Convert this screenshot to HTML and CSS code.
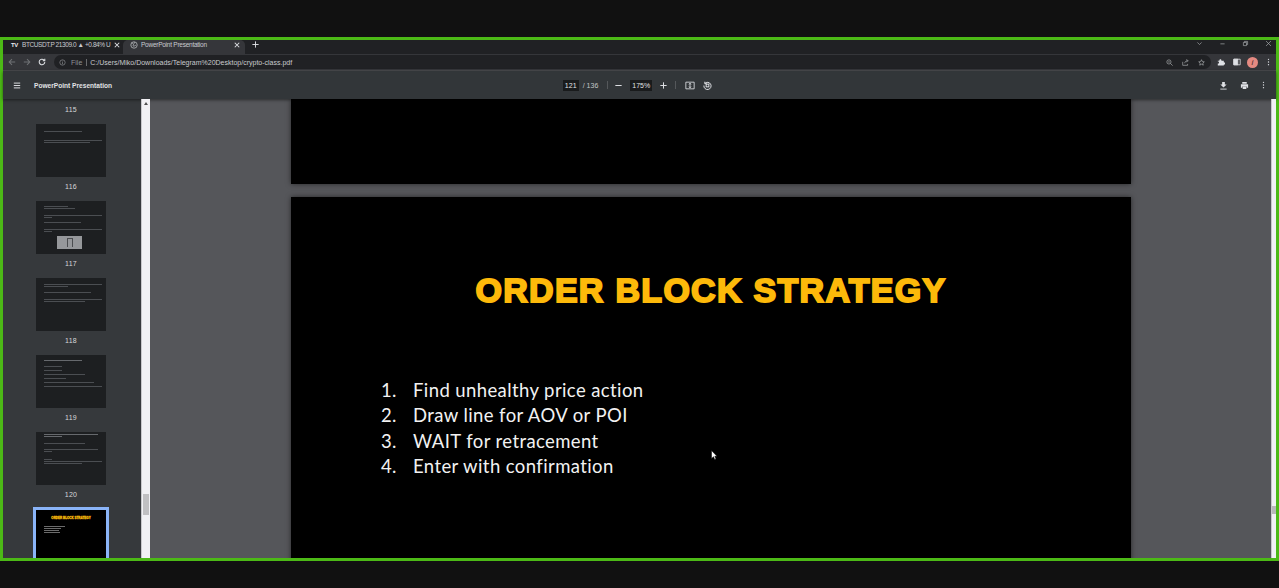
FILE: index.html
```html
<!DOCTYPE html>
<html lang="en">
<head>
    <meta charset="UTF-8">
    <title>PowerPoint Presentation</title>
    <link rel="stylesheet" href="styles.css">
</head>
<body>

<div class="top-band"></div>

<div class="window">
    <div class="tabstrip">
        <div class="tab tab-inactive">
            <span class="tv-logo">TV</span>
            <span class="tab-title tab-title-clip">BTCUSDT.P 21309.0 ▲ +0.84% U</span>
            <svg class="tab-close" viewBox="0 0 8 8"><path d="M1 1l6 6M7 1L1 7"/></svg>
        </div>
        <div class="tab tab-active">
            <svg class="globe" viewBox="0 0 10 10"><circle cx="5" cy="5" r="4"/><path d="M2 2.500c2 .5 3 1.500 2 3s2 1 3.500-.5M6 1.500L5 3.500"/></svg>
            <span class="tab-title tab-title-wide">PowerPoint Presentation</span>
            <svg class="tab-close" viewBox="0 0 8 8"><path d="M1 1l6 6M7 1L1 7"/></svg>
        </div>
        <svg class="new-tab" viewBox="0 0 9 9"><path d="M4.500 .5v8M.5 4.500h8"/></svg>
        <div class="window-controls">
            <svg class="win-icon" viewBox="0 0 10 10"><path d="M2 3.500l3 3 3-3"/></svg>
            <svg class="win-icon" viewBox="0 0 10 10"><path d="M2 5.500h6"/></svg>
            <svg class="win-icon" viewBox="0 0 10 10"><path d="M2 3.500h4.500v4.500h-4.500zM3.500 3.500v-1.500h4.500v4.500h-1.500"/></svg>
            <svg class="win-icon" viewBox="0 0 10 10"><path d="M1.500 1.500l7 7M8.500 1.500l-7 7"/></svg>
        </div>
    </div>

    <div class="addressbar">
        <svg class="nav-icon dim" viewBox="0 0 10 10"><path d="M9 5H1.500M5 1.500L1.500 5 5 8.500"/></svg>
        <svg class="nav-icon dim" viewBox="0 0 10 10"><path d="M1 5h7.500M5 1.500L8.500 5 5 8.500"/></svg>
        <svg class="nav-icon" viewBox="0 0 10 10"><path d="M8.500 5a3.500 3.500 0 1 1-1-2.500M8.500 1v2.500H6"/></svg>
        <div class="omnibox">
            <svg class="info-icon" viewBox="0 0 10 10"><circle cx="5" cy="5" r="3.800"/><path d="M5 4.500v3M5 2.500v1"/></svg>
            <span class="file-label">File</span>
            <span class="url">C:/Users/Miko/Downloads/Telegram%20Desktop/crypto-class.pdf</span>
            <div class="omni-right">
                <svg class="omni-icon" viewBox="0 0 10 10"><circle cx="4.200" cy="4.200" r="3"/><path d="M6.500 6.500l3 3M2.800 4.200h2.800"/></svg>
                <svg class="omni-icon" viewBox="0 0 10 10"><path d="M1 4v5h7V7M4 6c0-2 1.500-3.500 3.500-3.500M6 .8l3 1.700-3 1.700"/></svg>
                <svg class="omni-icon" viewBox="0 0 10 10"><path d="M5 1l1.200 2.700 2.800.3-2.100 1.900.6 2.900L5 7.400 2.500 8.800l.6-2.900L1 4l2.800-.3z"/></svg>
            </div>
        </div>
        <svg class="ext-icon" viewBox="0 0 10 10"><path d="M1 3.500h2c-.5-2.500 3-2.500 2.500 0h3v2c2.200-.5 2.200 3.300 0 2.800v1.200H1V7c2 .5 2-3 0-2.500z"/></svg>
        <svg class="ext-panel" viewBox="0 0 10 10"><path d="M1 1.500h8v7H1z"/><path class="panel-fill" d="M1 1.500h5v7H1z"/></svg>
        <span class="avatar">i</span>
        <svg class="menu-dots" viewBox="0 0 4 12"><circle cx="2" cy="2" r="1"/><circle cx="2" cy="6" r="1"/><circle cx="2" cy="10" r="1"/></svg>
    </div>

    <div class="pdf-toolbar">
        <div class="toolbar-left">
            <svg class="hamburger" viewBox="0 0 10 8"><path d="M1 1h8M1 4h8M1 7h8"/></svg>
            <span class="doc-title">PowerPoint Presentation</span>
        </div>
        <div class="toolbar-center">
            <span class="num-box">121</span>
            <span class="page-total">/ 136</span>
            <span class="divider"></span>
            <svg class="tool-icon" viewBox="0 0 10 10"><path d="M1.500 5h7"/></svg>
            <span class="num-box zoom-box">175%</span>
            <svg class="tool-icon" viewBox="0 0 10 10"><path d="M1.500 5h7M5 1.500v7"/></svg>
            <span class="divider divider-end"></span>
            <svg class="fit-icon" viewBox="0 0 12 10"><path d="M1 1h10v8H1z"/><path d="M6 2.500v5M4.500 3.500L6 2.500l1.500 1M4.500 6.500L6 7.500l1.500-1"/></svg>
            <svg class="tool-icon" viewBox="0 0 10 10"><path d="M2 2.800a4 4 0 1 1-1 2.200M2 .8v2.200h2.200"/><rect x="3.500" y="3.500" width="3" height="3"/></svg>
        </div>
        <div class="toolbar-right">
            <svg class="right-icon" viewBox="0 0 10 10"><path class="solid" d="M3.500 1h3v3h2L5 7.200 1.500 4h2z"/><path d="M1.500 9h7"/></svg>
            <svg class="right-icon" viewBox="0 0 10 10"><path class="solid" d="M2.500 1h5v2h-5zM1 3.500h8v4H7.500V6h-5v1.500H1zM3 6.500h4V9H3z"/></svg>
            <svg class="menu-dots" viewBox="0 0 4 12"><circle cx="2" cy="2" r="1"/><circle cx="2" cy="6" r="1"/><circle cx="2" cy="10" r="1"/></svg>
        </div>
    </div>

    <div class="viewer">
        <aside class="sidebar">
            <div class="thumb-list">
                <div class="thumb-label first-label">115</div>

                <div class="thumb">
                    <i class="line w65 mt7"></i>
                    <i class="line w98 mt8"></i>
                    <i class="line w78"></i>
                </div>
                <div class="thumb-label">116</div>

                <div class="thumb">
                    <i class="line w40 mt5"></i>
                    <i class="line w52"></i>
                    <i class="line w98 mt6"></i>
                    <i class="line w14"></i>
                    <i class="line w62 mt4"></i>
                    <i class="line w98 mt6"></i>
                    <i class="line w14"></i>
                    <span class="thumb-pic"><b></b></span>
                </div>
                <div class="thumb-label">117</div>

                <div class="thumb">
                    <i class="line w98 mt6"></i>
                    <i class="line w40"></i>
                    <i class="line w80 mt5"></i>
                    <i class="line w98 mt6"></i>
                    <i class="line w70"></i>
                </div>
                <div class="thumb-label">118</div>

                <div class="thumb">
                    <i class="line w65 mt5 bright"></i>
                    <i class="line w30 mt5"></i>
                    <i class="line w30 mt3"></i>
                    <i class="line w70 mt3"></i>
                    <i class="line w38 mt3"></i>
                    <i class="line w85 mt3"></i>
                    <i class="line w98 mt3"></i>
                </div>
                <div class="thumb-label">119</div>

                <div class="thumb">
                    <i class="line w92 mt2 bright"></i>
                    <i class="line w30 bright"></i>
                    <i class="line w70 mt6"></i>
                    <i class="line w92 mt5"></i>
                    <i class="line w14"></i>
                    <i class="line w14 mt7"></i>
                    <i class="line w98"></i>
                    <i class="line w65"></i>
                </div>
                <div class="thumb-label">120</div>

                <div class="thumb-selected">
                    <div class="mini-title">ORDER BLOCK STRATEGY</div>
                    <i class="mini-line w36 mini-first"></i>
                    <i class="mini-line w30"></i>
                    <i class="mini-line w26"></i>
                    <i class="mini-line w28"></i>
                </div>
            </div>
        </aside>
        <div class="side-scrollbar">
            <span class="scroll-arrow"></span>
            <span class="side-thumb"></span>
        </div>

        <main class="document">
            <div class="pages">
                <div class="page page-prev"></div>
                <div class="page page-current">
                    <h1 class="slide-title">ORDER BLOCK STRATEGY</h1>
                    <ol class="slide-list">
                        <li>Find unhealthy price action</li>
                        <li>Draw line for AOV or POI</li>
                        <li>WAIT for retracement</li>
                        <li>Enter with confirmation</li>
                    </ol>
                </div>
            </div>
            <div class="doc-scrollbar"><span class="doc-thumb"></span></div>
            <svg class="cursor" viewBox="0 0 7 10"><path d="M.5 .5v8l2-1.800 1.200 2.800 1.300-.6-1.200-2.600H6z"/></svg>
        </main>
    </div>
</div>

<div class="bottom-band"></div>

</body>
</html>
```

FILE: styles.css
```css
* {
    box-sizing: border-box;
}
html, body {
    height: 100%;
}
body {
    margin: 0;
    height: 588px;
    overflow: hidden;
    display: flex;
    flex-direction: column;
    background-color: #111;
    font-family: "Liberation Sans", Arial, sans-serif;
    color: #e8eaed;
}
svg {
    display: block;
    flex: none;
    fill: none;
    stroke: #dfe1e5;
    stroke-width: 1;
}

.top-band {
    height: 37px;
    background-color: #111;
}
.bottom-band {
    height: 27px;
    background-color: #111;
}
.window {
    height: 524px;
    border: 3px solid #4cb916;
    display: flex;
    flex-direction: column;
    background-color: #202124;
}

/* tabs */
.tabstrip {
    height: 14px;
    display: flex;
    align-items: flex-start;
    background-color: #202124;
    font-size: 6.500px;
}
.tab {
    height: 14px;
    padding-bottom: 5px;
    display: flex;
    align-items: center;
}
.tab-inactive {
    width: 120px;
    padding-left: 8px;
}
.tab-active {
    width: 122px;
    padding-left: 7px;
    background-color: #35363a;
    border-radius: 5px 5px 0 0;
}
.tv-logo {
    width: 11px;
    font-size: 6px;
    font-weight: bold;
    letter-spacing: -.5px;
}
.tab-title {
    color: #c9cbcf;
    white-space: nowrap;
    letter-spacing: -.25px;
}
.tab-title-clip {
    width: 87px;
    letter-spacing: -.42px;
}
.tab-title-wide {
    width: 93px;
    margin-left: 3px;
}
.tab-close {
    width: 6px;
    height: 6px;
    margin-left: 5px;
    stroke-width: 1.400;
}
.tab-active .tab-close {
    margin-left: 0;
}
.globe {
    width: 8px;
    height: 8px;
    stroke: #b8babd;
}
.new-tab {
    width: 7px;
    height: 7px;
    margin: 1px 0 0 7px;
    stroke-width: 1.200;
}
.window-controls {
    margin-left: auto;
    display: flex;
    gap: 16px;
    padding-right: 4px;
}
.win-icon {
    width: 7px;
    height: 7px;
    stroke: #a4a6a9;
}

/* address bar */
.addressbar {
    height: 17px;
    display: flex;
    align-items: center;
    padding-left: 5px;
    background-color: #35363a;
    border-bottom: 1px solid #4a4b4e;
}
.nav-icon {
    width: 8px;
    height: 8px;
    margin-right: 7px;
    stroke: #dfe1e5;
    stroke-width: 1.300;
}
.nav-icon.dim {
    stroke: #6f7174;
}
.omnibox {
    width: 1157px;
    height: 14px;
    margin-left: 1px;
    display: flex;
    align-items: center;
    padding-left: 5px;
    border-radius: 8px;
    background-color: #202124;
    font-size: 7px;
    white-space: nowrap;
}
.info-icon {
    width: 7px;
    height: 7px;
    stroke: #8a8c8f;
}
.file-label {
    margin-left: 5px;
    padding-right: 4px;
    border-right: 1px solid #6a6b6e;
    color: #8f9194;
}
.url {
    margin-left: 3px;
    color: #c8cacd;
}
.omni-right {
    margin-left: auto;
    display: flex;
    gap: 9px;
    padding-right: 6px;
}
.omni-icon {
    width: 7px;
    height: 7px;
    stroke: #b3b5b8;
    stroke-width: .9;
}
.ext-icon {
    width: 8px;
    height: 8px;
    margin-left: 6px;
    fill: #dfe1e5;
    stroke: none;
}
.ext-panel {
    width: 8px;
    height: 8px;
    margin-left: 8px;
}
.panel-fill {
    fill: #dfe1e5;
}
.avatar {
    width: 11px;
    height: 11px;
    margin-left: 6px;
    border-radius: 50%;
    background-color: #e58a82;
    color: #3a2320;
    font-size: 8px;
    font-style: italic;
    line-height: 11px;
    text-align: center;
}
.menu-dots {
    width: 3px;
    height: 8px;
    margin-left: 9px;
    fill: #dfe1e5;
    stroke: none;
}

/* pdf toolbar */
.pdf-toolbar {
    height: 28px;
    display: grid;
    grid-template-columns: 1fr auto 1fr;
    align-items: center;
    background-color: #323639;
    box-shadow: 0 1px 3px rgba(0, 0, 0, .5);
    position: relative;
}
.toolbar-left {
    display: flex;
    align-items: center;
    padding-left: 10px;
}
.hamburger {
    width: 8px;
    height: 7px;
    stroke-width: 1.200;
}
.doc-title {
    margin-left: 13px;
    font-size: 6.600px;
    font-weight: bold;
    color: #e0e2e4;
}
.toolbar-center {
    display: flex;
    align-items: center;
    margin-left: -4px;
    font-size: 7px;
}
.num-box {
    width: 16px;
    height: 11px;
    line-height: 11px;
    text-align: center;
    background-color: #191b1c;
    color: #e0e2e4;
}
.zoom-box {
    width: 22px;
    margin: 0 7px;
}
.page-total {
    margin-left: 4px;
    color: #c4c6c8;
}
.divider {
    width: 1px;
    height: 8px;
    margin: 0 6px 0 9px;
    background-color: #55585b;
}
.divider-end {
    margin: 0 9px 0 7px;
}
.tool-icon {
    width: 9px;
    height: 9px;
    stroke-width: 1.100;
}
.fit-icon {
    width: 10px;
    height: 9px;
    margin-right: 8px;
}
.toolbar-right {
    display: flex;
    justify-content: flex-end;
    align-items: center;
    gap: 12px;
    padding-right: 11px;
}
.toolbar-right .menu-dots {
    margin-left: 1px;
}
.right-icon {
    width: 9px;
    height: 9px;
}
.right-icon .solid {
    fill: #dfe1e5;
    stroke: none;
}

/* sidebar */
.viewer {
    flex: 1;
    min-height: 0;
    display: flex;
    background-color: #55565a;
}
.sidebar {
    width: 138px;
    flex: none;
    overflow: hidden;
    background-color: #36393c;
}
.thumb-list {
    display: flex;
    flex-direction: column;
    align-items: center;
    padding-right: 2px;
}
.thumb {
    width: 70px;
    height: 53px;
    padding: 0 3px 0 8px;
    display: flex;
    flex-direction: column;
    align-items: flex-start;
    background-color: #1d1f21;
}
.thumb-label {
    height: 24px;
    padding-top: 5px;
    font-size: 7px;
    letter-spacing: .2px;
    line-height: 10px;
    color: #d6d8da;
}
.first-label {
    height: 25px;
    padding-top: 6px;
}
.line {
    display: block;
    height: 1px;
    margin-top: 1px;
    background-color: #4b4e52;
}
.line.bright {
    background-color: #66696d;
}
.mt2 { margin-top: 2px; }
.mt3 { margin-top: 3px; }
.mt4 { margin-top: 4px; }
.mt5 { margin-top: 5px; }
.mt6 { margin-top: 6px; }
.mt7 { margin-top: 7px; }
.mt8 { margin-top: 8px; }
.w14 { width: 14%; }
.w26 { width: 26%; }
.w28 { width: 28%; }
.w30 { width: 30%; }
.w36 { width: 36%; }
.w38 { width: 38%; }
.w40 { width: 40%; }
.w52 { width: 52%; }
.w62 { width: 62%; }
.w65 { width: 65%; }
.w70 { width: 70%; }
.w78 { width: 78%; }
.w80 { width: 80%; }
.w85 { width: 85%; }
.w92 { width: 92%; }
.w98 { width: 98%; }
.thumb-pic {
    width: 25px;
    height: 13px;
    margin: 4px 0 0 13px;
    display: flex;
    justify-content: center;
    align-items: flex-end;
    background-color: #96989b;
}
.thumb-pic b {
    width: 6px;
    height: 9px;
    margin-bottom: 2px;
    border: 1px solid #4b4d50;
    border-bottom: 0;
}
.thumb-selected {
    width: 76px;
    height: 60px;
    flex: none;
    margin-top: -2px;
    padding: 6px 6px 0;
    border: 3px solid #8ab4f8;
    border-bottom: 0;
    background-color: #000;
}
.mini-title {
    font-size: 3px;
    font-weight: bold;
    line-height: 5px;
    text-align: center;
    white-space: nowrap;
    color: #f5b90c;
    -webkit-text-stroke: .3px #f5b90c;
}
.mini-line {
    display: block;
    height: 1px;
    margin: 1px 0 0 2px;
    background-color: #6c6c6c;
}
.mini-first {
    margin-top: 5px;
}
.side-scrollbar {
    width: 9px;
    flex: none;
    position: relative;
    background-color: #f1f1f4;
    border-left: 1px solid #c8c8cb;
}
.scroll-arrow {
    position: absolute;
    top: 3px;
    left: 2px;
    border: 2.500px solid transparent;
    border-top: 0;
    border-bottom: 3px solid #505050;
}
.side-thumb {
    position: absolute;
    top: 395px;
    left: 1px;
    width: 6px;
    height: 21px;
    background-color: #c0c0c2;
}

/* document */
.document {
    flex: 1;
    min-width: 0;
    display: flex;
    position: relative;
    overflow: hidden;
}
.pages {
    flex: 1;
    min-width: 0;
    height: 459px;
    padding-left: 141px;
    overflow: hidden;
}
.page {
    width: 840px;
    background-color: #000;
    box-shadow: 0 0 5px rgba(0, 0, 0, .55);
}
.page-prev {
    height: 85px;
}
.page-current {
    height: 500px;
    margin-top: 13px;
}
.slide-title {
    margin: 0;
    padding-top: 72px;
    font-family: "Liberation Sans", Arial, sans-serif;
    font-size: 34px;
    font-weight: bold;
    line-height: 43px;
    letter-spacing: 1.300px;
    text-align: center;
    color: #fdb90a;
    -webkit-text-stroke: 1.900px #fdb90a;
}
.slide-list {
    margin: 66px 0 0;
    padding-left: 111px;
    font-family: "Lato", sans-serif;
    font-size: 18.500px;
    letter-spacing: .4px;
    line-height: 25.300px;
    color: #f2f2f2;
}
.slide-list li {
    padding-left: 11px;
}
.doc-scrollbar {
    width: 5px;
    flex: none;
    position: relative;
    background-color: #f1f1f4;
    border-left: 1px solid #c8c8cb;
}
.doc-thumb {
    position: absolute;
    top: 407px;
    left: 0;
    width: 4px;
    height: 8px;
    background-color: #b9b9bb;
}
.cursor {
    position: absolute;
    left: 561px;
    top: 351px;
    width: 7px;
    height: 10px;
    fill: #fff;
    stroke: #000;
    stroke-width: .5;
}
```
